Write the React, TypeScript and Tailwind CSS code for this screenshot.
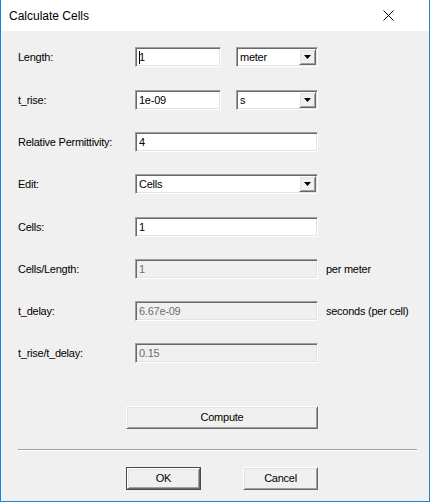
import React from 'react'

const sunken =
  'border border-t-[#a0a0a0] border-l-[#a0a0a0] border-b-white border-r-white shadow-[inset_1px_1px_0_#696969,inset_-1px_-1px_0_#e3e3e3]'
const raised =
  'border border-t-white border-l-white border-b-[#696969] border-r-[#696969] shadow-[inset_1px_1px_0_#e3e3e3,inset_-1px_-1px_0_#a0a0a0]'

function TextBox({ value, width, disabled, caret }: { value: string; width: string; disabled?: boolean; caret?: boolean }) {
  return (
    <div
      className={`${sunken} ${width} h-[20px] flex items-center pl-[3px] ${
        disabled ? 'bg-[#f0f0f0] text-[#6d6d6d]' : 'bg-white text-black'
      }`}
    >
      {caret && <span className="w-px h-[13px] bg-black" />}
      <span className={caret ? '-ml-px' : ''}>{value}</span>
    </div>
  )
}

function Combo({ value, width }: { value: string; width: string }) {
  return (
    <div className={`${sunken} ${width} h-[20px] flex items-stretch bg-white p-px`}>
      <div className="flex-1 flex items-center pl-[2px]">{value}</div>
      <div className={`${raised} w-[17px] bg-[#f0f0f0] flex items-center justify-center`}>
        <svg width="7" height="4" viewBox="0 0 7 4">
          <path d="M0 0h7L3.5 4z" fill="#000" />
        </svg>
      </div>
    </div>
  )
}

function Row({ label, children, className = '' }: { label: string; children: React.ReactNode; className?: string }) {
  return (
    <div className={`flex h-[20px] items-center ${className}`}>
      <div className="w-[117px]">{label}</div>
      {children}
    </div>
  )
}

function Button({ label, width, isDefault }: { label: string; width: string; isDefault?: boolean }) {
  const inner = (
    <div className={`${raised} h-full w-full bg-[#f0f0f0] flex items-center justify-center`}>{label}</div>
  )
  return (
    <div className={`${width} h-[23px] ${isDefault ? 'border border-[#4a4a4a]' : ''}`}>{inner}</div>
  )
}

export default function App() {
  return (
    <div
      className="w-[430px] h-[502px] flex flex-col bg-[#f0f0f0] border border-t-0 border-[#1883d7] text-[11px] tracking-[-0.25px] text-black"
      style={{ fontFamily: '"Liberation Sans", Arial, sans-serif' }}
    >
      <div className="h-[31px] bg-white flex items-center justify-between pl-[8px] pr-[35px] shrink-0">
        <span className="text-[12px] tracking-normal">Calculate Cells</span>
        <svg width="11" height="11" viewBox="0 0 11 11">
          <path d="M0.5 0.5l10 10M10.5 0.5l-10 10" stroke="#000" strokeWidth="1" />
        </svg>
      </div>

      <div className="flex-1 flex flex-col pl-[17px] pt-[16px]">
        <div className="flex flex-col gap-[22px]">
          <Row label="Length:">
            <TextBox value="1" width="w-[86px]" caret />
            <div className="ml-[15px]">
              <Combo value="meter" width="w-[82px]" />
            </div>
          </Row>
          <Row label="t_rise:" className="mt-px">
            <TextBox value="1e-09" width="w-[86px]" />
            <div className="ml-[15px]">
              <Combo value="s" width="w-[82px]" />
            </div>
          </Row>
          <Row label="Relative Permittivity:">
            <TextBox value="4" width="w-[183px]" />
          </Row>
          <Row label="Edit:">
            <Combo value="Cells" width="w-[183px]" />
          </Row>
          <Row label="Cells:" className="mt-px">
            <TextBox value="1" width="w-[183px]" />
          </Row>
          <Row label="Cells/Length:">
            <TextBox value="1" width="w-[183px]" disabled />
            <span className="ml-[8px]">per meter</span>
          </Row>
          <Row label="t_delay:">
            <TextBox value="6.67e-09" width="w-[183px]" disabled />
            <span className="ml-[8px]">seconds (per cell)</span>
          </Row>
          <Row label="t_rise/t_delay:">
            <TextBox value="0.15" width="w-[183px]" disabled />
          </Row>
        </div>

        <div className="mt-[43px] ml-[108px]">
          <Button label="Compute" width="w-[192px]" />
        </div>

        <div className="mt-[20px] w-[399px] h-[2px] border-t border-t-[#a0a0a0] border-b border-b-white" />

        <div className="mt-[16px] ml-[108px] flex gap-[42px]">
          <Button label="OK" width="w-[75px]" isDefault />
          <Button label="Cancel" width="w-[75px]" />
        </div>
      </div>
    </div>
  )
}
